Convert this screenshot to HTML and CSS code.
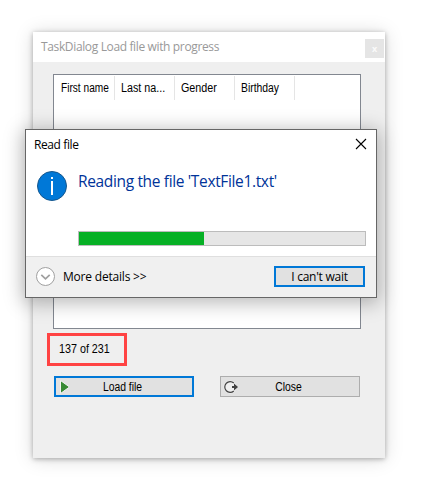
FILE: index.html
```html
<!DOCTYPE html>
<html lang="en">
<head>
<meta charset="utf-8">
<title>TaskDialog Load file with progress</title>
<link rel="stylesheet" href="styles.css">
</head>
<body>
<main class="window">
  <header class="titlebar">
    <h1 class="caption"><span>TaskDialog Load file with progress</span></h1>
    <button class="window-close">x</button>
  </header>
  <section class="content">
    <div class="list">
      <div class="column"><span class="narrow first">First name</span></div>
      <div class="column"><span class="narrow wide">Last na...</span></div>
      <div class="column"><span class="narrow wide">Gender</span></div>
      <div class="column"><span class="narrow">Birthday</span></div>
    </div>
    <div class="counter"><span class="narrow wide">137 of 231</span></div>
    <div class="actions">
      <button class="button primary">
        <svg class="button-icon" width="16" height="16" viewBox="0 0 16 16"><path d="M3.500 1.500 12.500 8 3.500 14.500Z" fill="#388a34" stroke="#f4f4f4"/></svg>
        <span class="label">Load file</span>
      </button>
      <button class="button">
        <svg class="button-icon" width="16" height="16" viewBox="0 0 16 16"><circle cx="7" cy="8" r="6.500" fill="#f0f0f0"/><path d="M10.800 4A5.400 5.400 0 1 0 10.800 12" fill="none" stroke="#424242" stroke-width="1.200"/><path d="M9 7H11V4.500L15 8 11 11.500V9H9Z" fill="#424242"/></svg>
        <span class="label">Close</span>
      </button>
    </div>
  </section>
</main>
<section class="dialog" role="dialog">
  <div class="dialog-main">
    <header class="dialog-title">
      <span class="read">Read file</span>
      <svg width="12" height="12" viewBox="0 0 12 12"><path d="M1 1 11 11M11 1 1 11" stroke="#000" stroke-width="1.100"/></svg>
    </header>
    <div class="message">
      <svg class="info" width="30" height="30" viewBox="0 0 30 30"><circle cx="15" cy="15" r="14.500" fill="#0078d7" stroke="#17578c"/><path d="M15 10V24M15 6V8" stroke="#fff" stroke-width="2"/></svg>
      <h2 class="instruction"><span>Reading the file 'TextFile1.txt'</span></h2>
    </div>
    <div class="progress"><div class="progress-value"></div></div>
  </div>
  <footer class="dialog-footer">
    <svg class="chevron" width="20" height="20" viewBox="0 0 20 20"><circle cx="10.500" cy="9.500" r="9" fill="#fff" stroke="#a0a0a0"/><path d="M6.300 7.800 10.500 11.800 14.700 7.800" fill="none" stroke="#a0a0a0" stroke-width="1.700"/></svg>
    <span class="details">More details &gt;&gt;</span>
    <button class="wait"><span>I can't wait</span></button>
  </footer>
</section>
</body>
</html>
```
FILE: styles.css
```css
* { box-sizing: border-box; }
body {
  margin: 0;
  padding: 32px 0 0 33px;
  width: 429px;
  height: 489px;
  overflow: hidden;
  position: relative;
  background: #fff;
  color: #000;
  font-family: "Open Sans", "Noto Sans", sans-serif;
  font-size: 12px;
}
h1, h2 { margin: 0; font-weight: 400; }
button { padding: 0; border: 0; font: inherit; color: inherit; }
span { white-space: nowrap; }
svg { display: block; flex: none; }
.window {
  width: 352px;
  height: 426px;
  background: #efefef;
  box-shadow: 0 1px 5px rgba(0, 0, 0, .3), 0 1px 18px rgba(0, 0, 0, .15);
}
.titlebar {
  height: 30px;
  padding: 0 1px 0 8px;
  display: flex;
  justify-content: space-between;
  background: #fff;
}
.caption { font-size: 12px; line-height: 30px; color: #999; letter-spacing: -.36px; }
.window-close {
  width: 19px;
  height: 19px;
  margin-top: 7px;
  background: #e5e5e5;
  color: #fafafa;
  font-size: 9px;
  font-weight: 700;
  line-height: 17px;
}
.content { padding: 12px 20px 0; }
.list {
  width: 308px;
  height: 255px;
  padding-top: 1px;
  display: flex;
  background: #fff;
  border: 1px solid #828790;
}
.column {
  width: 60px;
  height: 24px;
  padding-left: 6px;
  border-right: 1px solid #e5e5e5;
  line-height: 24px;
}
.column:first-child { width: 61px; padding-left: 7px; }
.column, .counter, .button { font-family: "Liberation Sans", Arial, sans-serif; font-size: 12.5px; }
.narrow { display: inline-block; transform: scaleX(.83); transform-origin: left; }
.narrow.first { transform: scaleX(.81); }
.narrow.wide { transform: scaleX(.86); }
.counter {
  width: 80px;
  height: 33px;
  margin: 4px 0 0 -6px;
  padding-left: 9px;
  border: 3px solid #ff4343;
  line-height: 26px;
}
.actions { display: flex; gap: 26px; margin: 10px 0 0 1px; }
.button {
  width: 140px;
  height: 21px;
  display: grid;
  grid-template-columns: 16px 1fr 19px;
  align-items: center;
  border: 1px solid #adadad;
  padding: 0 2px;
  background: #e1e1e1;
  text-align: center;
  line-height: 17px;
}
.button.primary { border: 2px solid #0078d7; padding: 0 1px; }
.label { padding-top: 2px; line-height: 15px; transform: scaleX(.83); }
.dialog {
  position: absolute;
  left: 25px;
  top: 129px;
  width: 352px;
  height: 169px;
  border: 1px solid #666;
  background: #fff;
  box-shadow: 0 3px 18px 2px rgba(0, 0, 0, .28);
}
.dialog-main { height: 127px; border-bottom: 1px solid #dfdfdf; }
.dialog-title {
  height: 30px;
  padding: 0 9px 0 8px;
  display: flex;
  justify-content: space-between;
  line-height: 30px;
}
.dialog-title svg { margin-top: 8px; }
.read { letter-spacing: -.4px; }
.message { display: flex; padding: 11px 0 0 11px; height: 71px; }
.instruction { margin-left: 11px; font-size: 15.5px; line-height: 21px; color: #039; letter-spacing: -.35px; }
.progress {
  width: 288px;
  height: 15px;
  margin-left: 52px;
  border: 1px solid #bcbcbc;
  background: #e6e6e6;
}
.progress-value { width: 125px; height: 100%; background: #06b025; }
.dialog-footer {
  height: 40px;
  padding: 0 11px 1px 9px;
  display: flex;
  align-items: center;
  background: #f0f0f0;
}
.details { margin-left: 8px; letter-spacing: -.2px; }
.wait {
  width: 91px;
  height: 21px;
  margin-left: auto;
  border: 2px solid #0078d7;
  background: #e1e1e1;
  line-height: 17px;
  letter-spacing: -.25px;
}
```
